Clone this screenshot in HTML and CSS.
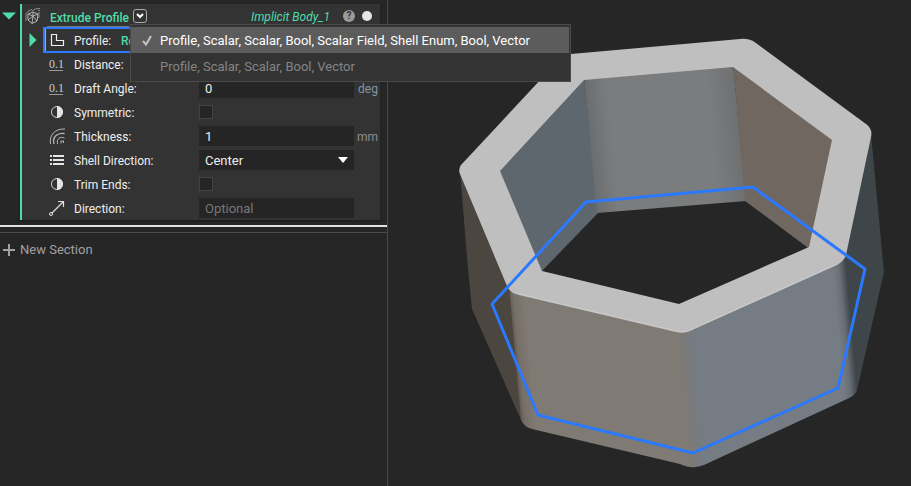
FILE: index.html
```
<!doctype html>
<html lang="en">

<head>
  <title>Extrude Profile</title>
  <meta charset="utf-8">
  <link rel="stylesheet" href="styles.css">
</head>

<body>

  <main class="app">
    <section class="panel">
      <div class="node">
        <button type="button" class="toggle" aria-label="Collapse block">
          <svg width="14" height="8" viewBox="0 0 14 8"><path d="M0 0.500H14L7 7.500Z" fill="#4edcaa"/></svg>
        </button>

        <form class="block">
          <header class="block-head">
            <svg class="block-icon" width="18" height="18" viewBox="0 0 18 18" fill="none" stroke="#b4b4b4">
              <path d="M3 7L8 5L13 7L12 14L7 16.500L3 13ZM3 7L8 9L13 7M8 9L7 16.500M3 13L8 9L12 14M8 5V9"/>
              <path d="M1 14V7Q3 3 7 2.500M7 4Q10 1 15 1.500M14 5V11M13 4L15 3" stroke="#8e8e8e"/>
            </svg>
            <span class="title">Extrude Profile</span>
            <button type="button" class="overload" aria-label="Choose overload">
              <svg width="8" height="6" viewBox="0 0 8 6"><path d="M1 1L4 4L7 1" fill="none" stroke="#fff" stroke-width="2"/></svg>
            </button>
            <span class="output">Implicit Body_1</span>
            <button type="button" class="help" aria-label="Help">?</button>
            <span class="dot"></span>

            <ul class="menu">
              <li><button type="button" class="menu-item selected">
                <svg class="check" width="10" height="12" viewBox="0 0 10 12"><path d="M1 6L4 9.500L9 1" fill="none" stroke="#c4c4c4" stroke-width="2"/></svg>
                Profile, Scalar, Scalar, Bool, Scalar Field, Shell Enum, Bool, Vector
              </button></li>
              <li><button type="button" class="menu-item">Profile, Scalar, Scalar, Bool, Vector</button></li>
            </ul>
          </header>

          <div class="row">
            <button type="button" class="expand" aria-label="Expand profile">
              <svg width="8" height="14" viewBox="0 0 8 14"><path d="M0.500 0V14L7.500 7Z" fill="#4edcaa"/></svg>
            </button>
            <div class="field active">
              <svg class="icon" width="16" height="16" viewBox="0 0 16 16"><path d="M2.500 2.500H7.500V8.500H14.500V13.500H2.500Z" fill="none" stroke="#eee" stroke-width="1.200"/></svg>
              <span class="label">Profile:</span>
              <span class="link">Re</span>
            </div>
          </div>

          <div class="row">
            <div class="field">
              <span class="icon number">0.1</span>
              <label class="label" for="distance">Distance:</label>
              <input type="text" class="input" id="distance">
            </div>
          </div>

          <div class="row">
            <div class="field">
              <span class="icon number">0.1</span>
              <label class="label" for="draft">Draft Angle:</label>
              <input type="text" class="input" id="draft" value="0">
              <span class="unit angle">deg</span>
            </div>
          </div>

          <div class="row">
            <div class="field">
              <svg class="icon" width="16" height="16" viewBox="0 0 16 16"><circle cx="8" cy="8" r="5.500" fill="#333" stroke="#d0d0d0"/><path d="M8 2A6 6 0 0 1 8 14Z" fill="#e4e4e4"/></svg>
              <label class="label" for="symmetric">Symmetric:</label>
              <input type="checkbox" class="check-box" id="symmetric">
            </div>
          </div>

          <div class="row">
            <div class="field">
              <svg class="icon" width="16" height="16" viewBox="0 0 16 16" fill="none" stroke="#b8b8b8">
                <path d="M1.500 16C0 7 6 0.500 16 1"/>
                <path d="M5 16C3 9 8 4.500 15.500 5.500" stroke-width="1.300"/>
                <path d="M8.500 16C7.500 11 11 8 15.500 10"/>
                <path d="M12 15.500V13H14.500V15"/>
              </svg>
              <label class="label" for="thickness">Thickness:</label>
              <input type="text" class="input" id="thickness" value="1">
              <span class="unit">mm</span>
            </div>
          </div>

          <div class="row">
            <div class="field">
              <svg class="icon" width="16" height="16" viewBox="0 0 16 16" fill="#e4e4e4"><path d="M1 3h2v2H1zM4 3h11v2H4zM1 7h2v2H1zM4 7h11v2H4zM1 11h2v2H1zM4 11h11v2H4z"/></svg>
              <label class="label" for="shell">Shell Direction:</label>
              <select class="input select" id="shell">
                <option>Center</option>
              </select>
            </div>
          </div>

          <div class="row">
            <div class="field">
              <svg class="icon" width="16" height="16" viewBox="0 0 16 16"><circle cx="8" cy="8" r="5.500" fill="#333" stroke="#d0d0d0"/><path d="M8 2A6 6 0 0 1 8 14Z" fill="#e4e4e4"/></svg>
              <label class="label" for="trim">Trim Ends:</label>
              <input type="checkbox" class="check-box" id="trim">
            </div>
          </div>

          <div class="row">
            <div class="field">
              <svg class="icon" width="16" height="16" viewBox="0 0 16 16" fill="none" stroke="#e0e0e0"><circle cx="2" cy="14" r="1.500"/><path d="M3 13L14 2M9 1.500H14.500V7" stroke-width="1.200"/></svg>
              <label class="label" for="direction">Direction:</label>
              <input type="text" class="input" id="direction" placeholder="Optional">
            </div>
          </div>
        </form>
      </div>

      <div class="section-line"></div>
      <button type="button" class="new-section">
        <svg width="12" height="12" viewBox="0 0 12 12"><path d="M6 0V12M0 6H12" stroke="#a0a0a0" stroke-width="2"/></svg>
        New Section
      </button>
    </section>

    <section class="view">
      <svg class="scene" viewBox="388 0 523 486" role="img" aria-label="Extruded heptagon">
        <defs>
          <linearGradient id="front" gradientUnits="userSpaceOnUse" x1="512" y1="360" x2="692" y2="343">
            <stop offset="0" stop-color="#4f4840"/>
            <stop offset="0.040" stop-color="#766e67"/>
            <stop offset="0.100" stop-color="#807a74"/>
            <stop offset="0.920" stop-color="#807a74"/>
            <stop offset="1" stop-color="#7b7a79"/>
          </linearGradient>
          <linearGradient id="side" gradientUnits="userSpaceOnUse" x1="685" y1="360" x2="853" y2="345">
            <stop offset="0" stop-color="#7b7a79"/>
            <stop offset="0.060" stop-color="#757c83"/>
            <stop offset="0.920" stop-color="#757c83"/>
            <stop offset="0.960" stop-color="#686e74"/>
            <stop offset="1" stop-color="#3f474c"/>
          </linearGradient>
          <linearGradient id="back" gradientUnits="userSpaceOnUse" x1="589" y1="147" x2="739" y2="134">
            <stop offset="0" stop-color="#696d70"/>
            <stop offset="0.160" stop-color="#7b7c7d"/>
            <stop offset="0.820" stop-color="#7b7c7d"/>
            <stop offset="1" stop-color="#6e7072"/>
          </linearGradient>
        </defs>
        <!-- inside walls, they run a little under the top face -->
        <path d="M496 171L584 76L598 213L540 273Z" fill="#5f676e"/>
        <path d="M584 76L733 63L746 201L597 213Z" fill="url(#back)"/>
        <path d="M733 63L836 139L811 250L745 201Z" fill="#706860"/>
        <!-- outside walls -->
        <path d="M460 170L467 258L472 309L521 420L528 428L515 290Z" fill="#4b463f"/>
        <path d="M871 134L883 262L884 272L857 390L852 396L842 260Z" fill="#3f464a"/>
        <path d="M509 286L517 292L684 330L696 467Q689 468 680 464L532 429Q524 427 521 420Z" fill="url(#front)"/>
        <path d="M680 330L842 258L845 255L857 390Q855 396 847 399L704 465Q699 467 693 467Z" fill="url(#side)"/>
        <!-- top face -->
        <path fill-rule="evenodd" fill="#bfbfbf" d="M461 165L557 62Q562 55 571 54L740 39Q749 38 756 43L866 124Q873 129 871 137L846 255Q844 261 837 265L690 331Q684 334 676 332L519 295Q510 293 507 286L460 174Q458 169 461 165ZM500 171L542 271L679 304L809 247L832 140L733 67L584 80Z"/>
        <path d="M519 294L676 331Q684 333 690 330L837 264" fill="none" stroke="#cacaca"/>
        <path d="M586 202L753 187L865 269L838 388L693 453L538 415L492 304Z" fill="none" stroke="#2b79ff" stroke-width="3" stroke-linejoin="round"/>
      </svg>
    </section>
  </main>

</body>
</html>
```

FILE: styles.css
```
* {
  box-sizing: border-box;
}
body {
  margin: 0;
  background: #262626;
  color: #eee;
  font: 13px/16px Roboto, sans-serif;
}
button, input, select {
  margin: 0;
  padding: 0;
  border: 0;
  background: none;
  color: inherit;
  font: inherit;
}
svg {
  display: block;
}
.app {
  display: grid;
  grid-template-columns: 388px 1fr;
  min-height: 100vh;
}
.panel {
  padding-top: 4px;
  border-right: 1px solid #4a4a4a;
}
.node {
  display: grid;
  grid-template-columns: 20px 1fr;
  align-items: start;
  padding-right: 7px;
}
.toggle {
  padding: 8px 0 0 2px;
}
.block {
  border-left: 2px solid #4edcaa;
  background: #333;
  box-shadow: 0 1px 2px #1c1c1c;
}

/* header */
.block-head {
  position: relative;
  display: flex;
  align-items: center;
  height: 24px;
  padding: 0 8px 0 3px;
}
.title {
  margin-left: 4px;
  padding: 4px 0 0 3px;
  border-bottom: 1px solid #777;
  color: #4edcaa;
  font-size: 12px;
  font-weight: 500;
}
.overload {
  display: flex;
  align-items: center;
  justify-content: center;
  width: 14px;
  height: 14px;
  margin-left: 4px;
  border: 1px solid #aaa;
  border-radius: 3px;
}
.output {
  margin-left: auto;
  padding-top: 1px;
  color: #4edcaa;
  font-size: 12px;
  font-style: italic;
}
.help {
  width: 12px;
  height: 12px;
  margin: 0 7px 0 13px;
  border-radius: 50%;
  background: #9a9a9a;
  color: #333;
  font-size: 10px;
  font-weight: bold;
  line-height: 12px;
}
.dot {
  width: 10px;
  height: 10px;
  border-radius: 50%;
  background: #e6e6e6;
}

/* overload list, lies over the rows and the view */
.menu {
  position: absolute;
  z-index: 1;
  top: 20px;
  left: 108px;
  width: 441px;
  margin: 0;
  padding: 2px 1px 2px 0;
  border: 1px solid #4a4a4a;
  background: #333;
  list-style: none;
}
.menu-item {
  display: flex;
  align-items: center;
  width: 100%;
  height: 26px;
  padding: 2px 0 0 29px;
  color: #858585;
  white-space: nowrap;
}
.selected {
  padding-left: 11px;
  background: #5c5c5c;
  color: #fff;
}
.check {
  margin-right: 8px;
}

/* inputs */
.row {
  display: grid;
  grid-template-columns: 21px 1fr;
  height: 24px;
}
.expand {
  padding-left: 7px;
}
.field {
  display: grid;
  grid-column: 2;
  grid-template-columns: 31px 125px 1fr 26px;
  align-items: center;
}
.active {
  grid-template-columns: 31px 47px 1fr;
  margin: -1px 0;
  box-shadow: inset 0 0 0 2px #2b79ff, inset 3px 0 0 #4edcaa;
}
.icon {
  margin-left: 6px;
}
.number {
  width: 14px;
  border-bottom: 1px solid #999;
  color: #ccc;
  font: 12px/12px "Liberation Serif", serif;
}
.label, .link, .unit {
  padding-top: 2px;
  font-size: 12px;
}
.link {
  color: #4edcaa;
  font-weight: 500;
}
.input {
  width: 100%;
  height: 20px;
  padding: 1px 6px 0;
  background: #252525;
}
.input::placeholder {
  color: #777;
}
.select {
  appearance: none;
  background: #252525 url("data:image/svg+xml,%3Csvg xmlns='http://www.w3.org/2000/svg' width='10' height='6'%3E%3Cpath d='M0 0H10L5 6Z' fill='%23fff'/%3E%3C/svg%3E") no-repeat right 6px center;
}
.unit {
  padding-left: 3px;
  color: #8c8c8c;
}
.angle {
  padding-left: 4px;
  color: #8295a8;
}
.check-box {
  appearance: none;
  width: 14px;
  height: 14px;
  border: 1px solid #444;
  background: #252525;
}

.section-line {
  height: 8px;
  margin-top: 5px;
  border-top: 2px solid #e0e0e0;
  border-bottom: 1px solid #4a4a4a;
}
.new-section {
  display: flex;
  align-items: center;
  gap: 5px;
  padding: 9px 3px;
  color: #a0a0a0;
}
.view {
  min-width: 0;
}
.scene {
  width: 100%;
  height: 100vh;
}
```
